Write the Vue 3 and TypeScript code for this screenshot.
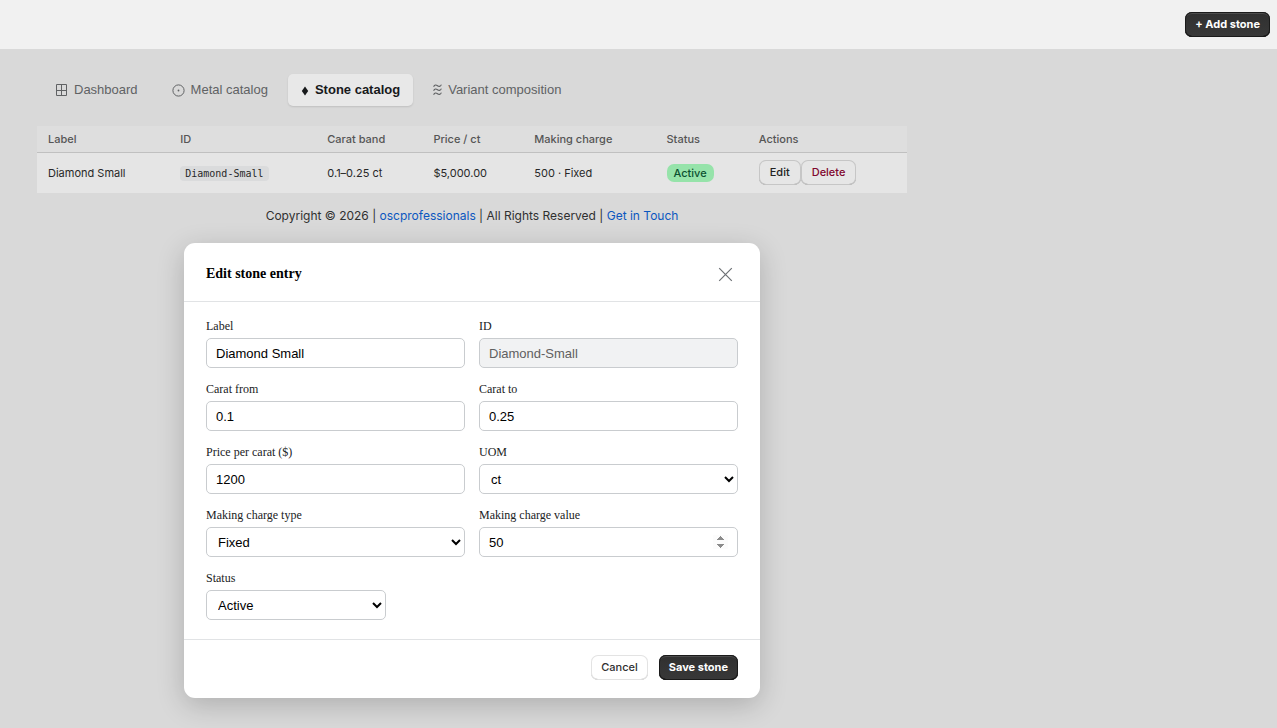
<script setup lang="ts">
import { reactive } from 'vue'

interface Stone {
  label: string
  id: string
  band: string
  price: string
  charge: string
  status: string
}

const tabs = [
  { icon: 'grid', name: 'Dashboard', active: false },
  { icon: 'circle', name: 'Metal catalog', active: false },
  { icon: 'diamond', name: 'Stone catalog', active: true },
  { icon: 'waves', name: 'Variant composition', active: false },
]

const columns = ['Label', 'ID', 'Carat band', 'Price / ct', 'Making charge', 'Status', 'Actions']

const stones: Stone[] = [
  {
    label: 'Diamond Small',
    id: 'Diamond-Small',
    band: '0.1–0.25 ct',
    price: '$5,000.00',
    charge: '500 · Fixed',
    status: 'Active',
  },
]

const form = reactive({
  label: 'Diamond Small',
  id: 'Diamond-Small',
  caratFrom: '0.1',
  caratTo: '0.25',
  price: '1200',
  uom: 'ct',
  chargeType: 'Fixed',
  chargeValue: 50,
  status: 'Active',
})
</script>

<template>
  <div class="page">
    <header class="topbar">
      <button type="button" class="btn primary">+ Add stone</button>
    </header>

    <main class="content">
      <nav class="tabs">
        <a v-for="tab in tabs" :key="tab.name" href="#" class="tab" :class="{ active: tab.active }">
          <svg v-if="tab.icon === 'grid'" class="icon" width="13" height="13" viewBox="0 0 13 13" fill="none" stroke="currentColor">
            <path d="M1.5 .5h10v11h-10zM6.5 .5v11M1.5 6.5h10" />
          </svg>
          <svg v-else-if="tab.icon === 'circle'" class="icon" width="13" height="13" viewBox="0 0 13 13" fill="none" stroke="currentColor">
            <circle cx="6.5" cy="6.5" r="5.6" />
            <circle cx="6.5" cy="6.5" r="0.9" fill="currentColor" stroke="none" />
          </svg>
          <svg v-else-if="tab.icon === 'diamond'" class="icon" width="8" height="13" viewBox="0 0 8 13" fill="currentColor">
            <path d="M4 2.500L7.200 7L4 11.500L.8 7z" />
          </svg>
          <svg v-else class="icon" width="9" height="13" viewBox="0 0 9 13" fill="none" stroke="currentColor" stroke-width="1.1">
            <path d="M.6 2.800C1.600 .2 3.400 .8 4.500 1.700S7.400 3 8.400 .6M.6 6.800C1.600 4.200 3.400 4.800 4.500 5.700S7.400 7 8.400 4.600M.6 10.800C1.600 8.200 3.400 8.800 4.500 9.700S7.400 11 8.400 8.600" />
          </svg>
          <span>{{ tab.name }}</span>
        </a>
      </nav>

      <table class="stones">
        <colgroup>
          <col class="c-label" />
          <col class="c-id" />
          <col class="c-band" />
          <col class="c-price" />
          <col class="c-charge" />
          <col class="c-status" />
          <col />
        </colgroup>
        <thead>
          <tr>
            <th v-for="column in columns" :key="column" scope="col">{{ column }}</th>
          </tr>
        </thead>
        <tbody>
          <tr v-for="stone in stones" :key="stone.id">
            <td>{{ stone.label }}</td>
            <td><code>{{ stone.id }}</code></td>
            <td>{{ stone.band }}</td>
            <td>{{ stone.price }}</td>
            <td>{{ stone.charge }}</td>
            <td><span class="badge">{{ stone.status }}</span></td>
            <td>
              <div class="actions">
                <button type="button" class="btn muted">Edit</button>
                <button type="button" class="btn muted danger">Delete</button>
              </div>
            </td>
          </tr>
        </tbody>
      </table>

      <p class="copyright">
        Copyright © 2026 | <a href="#">oscprofessionals</a> | All Rights Reserved | <a href="#">Get in Touch</a>
      </p>

      <form class="dialog" role="dialog" aria-labelledby="dialog-title" @submit.prevent>
        <div class="dialog-head">
          <h2 id="dialog-title">Edit stone entry</h2>
          <button type="button" class="close" aria-label="Close">
            <svg width="15" height="15" viewBox="0 0 15 15" fill="none" stroke="currentColor" stroke-width="1.2">
              <path d="M1.200 1.200l12.600 12.600M13.800 1.200L1.200 13.800" />
            </svg>
          </button>
        </div>

        <div class="fields">
          <div class="field">
            <label for="f-label">Label</label>
            <input id="f-label" v-model="form.label" type="text" />
          </div>
          <div class="field">
            <label for="f-id">ID</label>
            <input id="f-id" v-model="form.id" type="text" disabled />
          </div>
          <div class="field">
            <label for="f-from">Carat from</label>
            <input id="f-from" v-model="form.caratFrom" type="text" />
          </div>
          <div class="field">
            <label for="f-to">Carat to</label>
            <input id="f-to" v-model="form.caratTo" type="text" />
          </div>
          <div class="field">
            <label for="f-price">Price per carat ($)</label>
            <input id="f-price" v-model="form.price" type="text" />
          </div>
          <div class="field">
            <label for="f-uom">UOM</label>
            <select id="f-uom" v-model="form.uom">
              <option>ct</option>
            </select>
          </div>
          <div class="field">
            <label for="f-type">Making charge type</label>
            <select id="f-type" v-model="form.chargeType">
              <option>Fixed</option>
            </select>
          </div>
          <div class="field">
            <label for="f-value">Making charge value</label>
            <input id="f-value" v-model="form.chargeValue" class="spin" type="number" />
          </div>
          <div class="field">
            <label for="f-status">Status</label>
            <select id="f-status" v-model="form.status" class="short">
              <option>Active</option>
            </select>
          </div>
        </div>

        <div class="dialog-foot">
          <button type="button" class="btn light">Cancel</button>
          <button type="submit" class="btn primary">Save stone</button>
        </div>
      </form>
    </main>
  </div>
</template>

<style>
body {
  background: #d9d9d9;
}
</style>

<style scoped>
.page {
  font-family: Inter, sans-serif;
  color: #303030;
}
* {
  box-sizing: border-box;
}
.topbar {
  display: flex;
  justify-content: flex-end;
  padding: 12px 7px;
  background: #f1f1f1;
}
.btn {
  height: 25px;
  padding: 0 10px 2px;
  border: 0;
  border-radius: 7px;
  font: 550 11px/16px Inter, sans-serif;
  white-space: nowrap;
}
.primary {
  color: #fff;
  font-weight: 650;
  background: linear-gradient(#303030, #383838);
  box-shadow: inset 0 0 0 1px #1a1a1a, inset 0 2px 0 #4c4c4c, inset 0 -1px 0 #000;
}
.light {
  color: #303030;
  background: #fff;
  box-shadow: inset 0 0 0 1px #e3e3e3, inset 0 -1px 0 #b5b5b5;
}
.muted {
  padding: 0 11px 2px;
  color: #222;
  background: #e6e6e6;
  box-shadow: inset 0 0 0 1px #c6c6c6, inset 0 -1px 0 #999;
}
.danger {
  color: #80052d;
}
.content {
  max-width: 944px;
  padding: 25px 37px 30px;
}
.tabs {
  display: flex;
  gap: 6px;
  padding: 0 4px;
}
.tab {
  display: flex;
  align-items: center;
  gap: 6px;
  height: 32px;
  padding: 0 14px;
  border-radius: 5px;
  color: #606264;
  font: 13px/20px "Liberation Sans", Arial, sans-serif;
  text-decoration: none;
  white-space: nowrap;
}
.tab.active {
  padding: 0 13px;
  color: #17191b;
  font-weight: 700;
  background: #e8e8e8;
  box-shadow: 0 1px 2px rgba(0, 0, 0, 0.12);
}
.icon {
  flex: none;
}
.stones {
  width: 100%;
  margin-top: 20px;
  table-layout: fixed;
  border-collapse: collapse;
  font-size: 11px;
  line-height: 16px;
}
.c-label,
.c-charge {
  width: 15.2%;
}
.c-id {
  width: 16.900%;
}
.c-band {
  width: 12.200%;
}
.c-price {
  width: 11.600%;
}
.c-status {
  width: 10.600%;
}
.stones th,
.stones td {
  padding: 0 11px;
  text-align: left;
  white-space: nowrap;
}
.stones th {
  height: 26px;
  color: #555;
  font-weight: 500;
  background: #dedede;
  border-bottom: 1px solid #c0c0c0;
}
.stones td {
  height: 41px;
  color: #282828;
  font-weight: 400;
  background: #e5e5e5;
}
.stones code {
  padding: 2px 5px;
  border-radius: 4px;
  background: #dadbdc;
  font: 10px/14px "DejaVu Sans Mono", monospace;
}
.badge {
  padding: 2px 7px;
  border-radius: 7px;
  color: #0c5132;
  background: #96e3aa;
  font-weight: 550;
}
.actions {
  display: flex;
}
.copyright {
  margin: 14px 0 18px;
  font-size: 12px;
  line-height: 18px;
  font-weight: 400;
  text-align: center;
}
.copyright a {
  color: #0b57c0;
  text-decoration: none;
}
.dialog {
  max-width: 576px;
  margin: 0 auto;
  border-radius: 11px;
  color: #202223;
  background: #fff;
  box-shadow: 0 7px 28px rgba(0, 0, 0, 0.2);
  font-family: "Liberation Serif", "Times New Roman", serif;
}
.dialog-head {
  display: flex;
  align-items: center;
  justify-content: space-between;
  height: 59px;
  padding: 4px 22px 0;
  border-bottom: 1px solid #e1e3e5;
}
.dialog-head h2 {
  margin: 0;
  color: #000;
  font-size: 14px;
  line-height: 20px;
}
.close {
  display: flex;
  padding: 5px;
  border: 0;
  color: #6d7175;
  background: none;
}
.fields {
  display: grid;
  grid-template-columns: 1fr 1fr;
  gap: 13px 14px;
  padding: 16px 22px 19px;
}
.field {
  display: flex;
  flex-direction: column;
  gap: 4px;
}
.field label {
  font-size: 12px;
  line-height: 16px;
}
.field input,
.field select {
  width: 100%;
  height: 30px;
  padding: 0 9px;
  border: 1px solid #c9cccf;
  border-radius: 5px;
  color: #000;
  background: #fff;
  font: 13px/18px "Liberation Sans", Arial, sans-serif;
}
.field select {
  padding: 0 3px 0 7px;
}
.field input:disabled {
  color: #606060;
  background: #f1f2f3;
}
.field .short {
  width: 180px;
}
.spin::-webkit-inner-spin-button {
  opacity: 1;
}
.dialog-foot {
  display: flex;
  justify-content: flex-end;
  gap: 11px;
  padding: 15px 22px 18px;
  border-top: 1px solid #e1e3e5;
}
</style>
